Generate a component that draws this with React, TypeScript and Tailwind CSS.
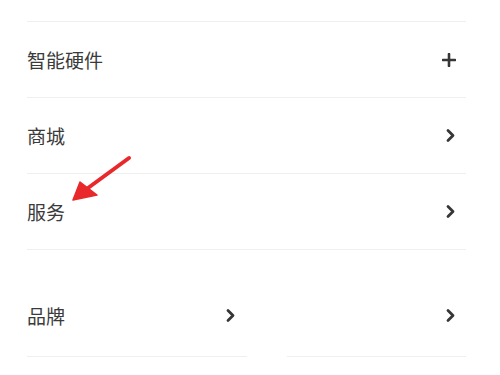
import React from "react";

const font = { fontFamily: '"Noto Sans CJK SC", "Noto Sans", sans-serif' };

function Chevron() {
  return (
    <svg width="11" height="15" viewBox="0 0 11 15" className="shrink-0">
      <polyline points="3,2.5 8,7.5 3,12.5" fill="none" stroke="#363636" strokeWidth="2.8" strokeLinecap="round" strokeLinejoin="round" />
    </svg>
  );
}

function Plus() {
  return (
    <svg width="14" height="14" viewBox="0 0 14 14" className="shrink-0">
      <path d="M7 1v12M1 7h12" stroke="#363636" strokeWidth="2.6" strokeLinecap="round" />
    </svg>
  );
}

function Row({ label, icon }: { label: string; icon: React.ReactNode }) {
  return (
    <div className="flex h-[76px] items-center justify-between border-b border-[#efefef] pr-[10px]">
      <span className="text-[19px] leading-none text-[#3a3a3a]">{label}</span>
      {icon}
    </div>
  );
}

export default function App() {
  return (
    <div className="relative h-[375px] w-[500px] overflow-hidden bg-white" style={font}>
      <div className="pl-[27px] pr-[34px] pt-[21px]">
        <div className="border-t border-[#efefef]">
          <Row label="智能硬件" icon={<Plus />} />
          <Row label="商城" icon={<Chevron />} />
          <Row label="服务" icon={<Chevron />} />
        </div>

        <div className="mt-[28px] grid grid-cols-[220px_179px] gap-x-[40px]">
          <div className="flex h-[79px] items-center justify-between border-b border-[#efefef] pb-[3px] pr-[11px]">
            <span className="text-[19px] leading-none text-[#3a3a3a]">品牌</span>
            <Chevron />
          </div>
          <div className="flex h-[79px] items-center justify-end border-b border-[#efefef] pb-[3px] pr-[10px]">
            <Chevron />
          </div>
        </div>
      </div>

      {/* red annotation arrow */}
      <svg className="absolute left-0 top-0" width="500" height="375" viewBox="0 0 500 375">
        <line x1="129" y1="158" x2="88" y2="188" stroke="#e8282b" strokeWidth="4" strokeLinecap="round" />
        <polygon points="73,200 80,182 97,195" fill="#e8282b" stroke="#e8282b" strokeWidth="1.5" strokeLinejoin="round" />
      </svg>
    </div>
  );
}
